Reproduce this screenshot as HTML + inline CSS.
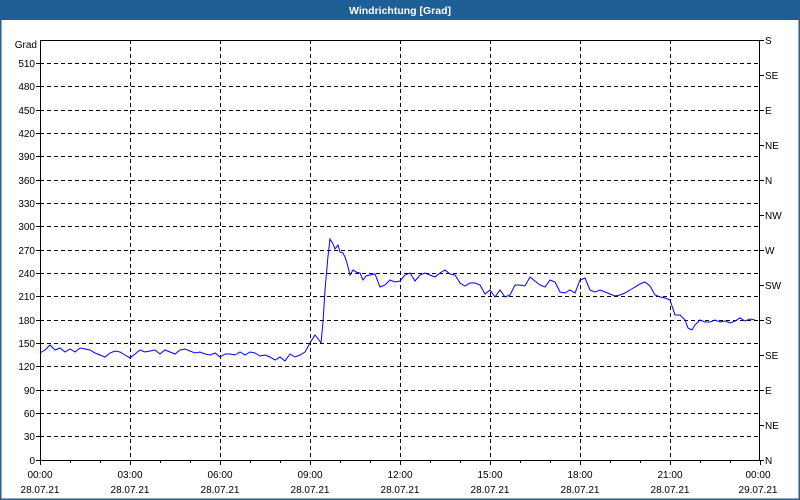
<!DOCTYPE html>
<html><head><meta charset="utf-8"><style>
html,body{margin:0;padding:0;width:800px;height:500px;overflow:hidden;background:#fff}
svg{display:block}
text{font-family:"Liberation Sans",sans-serif;font-size:10px;fill:#000}
</style></head><body>
<svg width="800" height="500" viewBox="0 0 800 500" xmlns="http://www.w3.org/2000/svg">
<rect x="0" y="0" width="800" height="500" fill="#fff"/>
<rect x="0.5" y="0.5" width="799" height="499" fill="none" stroke="#1e5f96" stroke-width="2"/>
<rect x="0" y="0" width="800" height="20" fill="#1e5f96"/>
<text x="400" y="14" text-anchor="middle" style="fill:#fff;font-weight:bold;font-size:10.5px">Windrichtung [Grad]</text>
<g stroke="#000" stroke-width="1" stroke-dasharray="4,3" fill="none">
<path d="M40 436.5H760M40 413.5H760M40 390.5H760M40 366.5H760M40 343.5H760M40 320.5H760M40 296.5H760M40 273.5H760M40 250.5H760M40 226.5H760M40 203.5H760M40 180.5H760M40 156.5H760M40 133.5H760M40 110.5H760M40 86.5H760M40 63.5H760"/>
<path d="M130.5 40V460M220.5 40V460M310.5 40V460M400.5 40V460M490.5 40V460M580.5 40V460M670.5 40V460"/>
</g>
<rect x="40.5" y="40.5" width="719" height="420" fill="none" stroke="#000"/>
<g stroke="#000">
<path d="M36 460.5H40M36 436.5H40M36 413.5H40M36 390.5H40M36 366.5H40M36 343.5H40M36 320.5H40M36 296.5H40M36 273.5H40M36 250.5H40M36 226.5H40M36 203.5H40M36 180.5H40M36 156.5H40M36 133.5H40M36 110.5H40M36 86.5H40M36 63.5H40"/>
<path d="M760 40.5H764M760 75.5H764M760 110.5H764M760 145.5H764M760 180.5H764M760 215.5H764M760 250.5H764M760 285.5H764M760 320.5H764M760 355.5H764M760 390.5H764M760 425.5H764M760 460.5H764"/>
<path d="M40.5 460V465M70.5 460V463M100.5 460V463M130.5 460V465M160.5 460V463M190.5 460V463M220.5 460V465M250.5 460V463M280.5 460V463M310.5 460V465M340.5 460V463M370.5 460V463M400.5 460V465M430.5 460V463M460.5 460V463M490.5 460V465M520.5 460V463M550.5 460V463M580.5 460V465M610.5 460V463M640.5 460V463M670.5 460V465M700.5 460V463M730.5 460V463M760.5 460V465"/>
</g>
<g text-anchor="end">
<text x="37" y="48">Grad</text>
<text x="35" y="67">510</text><text x="35" y="90">480</text><text x="35" y="114">450</text><text x="35" y="137">420</text><text x="35" y="160">390</text><text x="35" y="184">360</text><text x="35" y="207">330</text><text x="35" y="230">300</text><text x="35" y="254">270</text><text x="35" y="277">240</text><text x="35" y="300">210</text><text x="35" y="324">180</text><text x="35" y="347">150</text><text x="35" y="370">120</text><text x="35" y="394">90</text><text x="35" y="417">60</text><text x="35" y="440">30</text><text x="35" y="464">0</text>
</g>
<g>
<text x="765" y="44">S</text><text x="765" y="79">SE</text><text x="765" y="114">E</text><text x="765" y="149">NE</text><text x="765" y="184">N</text><text x="765" y="219">NW</text><text x="765" y="254">W</text><text x="765" y="289">SW</text><text x="765" y="324">S</text><text x="765" y="359">SE</text><text x="765" y="394">E</text><text x="765" y="429">NE</text><text x="765" y="464">N</text>
</g>
<g text-anchor="middle">
<text x="40" y="478">00:00</text><text x="130" y="478">03:00</text><text x="220" y="478">06:00</text><text x="310" y="478">09:00</text><text x="400" y="478">12:00</text><text x="490" y="478">15:00</text><text x="580" y="478">18:00</text><text x="670" y="478">21:00</text><text x="758" y="478">00:00</text>
<text x="40" y="493">28.07.21</text><text x="130" y="493">28.07.21</text><text x="220" y="493">28.07.21</text><text x="310" y="493">28.07.21</text><text x="400" y="493">28.07.21</text><text x="490" y="493">28.07.21</text><text x="580" y="493">28.07.21</text><text x="670" y="493">28.07.21</text><text x="758" y="493">29.07.21</text>
</g>
<polyline fill="none" stroke="#0000ff" stroke-width="1" points="40,353 45,350 50,345 55,350 60,348 65,352 70,349 75,352 80,348 85,349 90,350 95,353 100,355 105,357 110,353 115,351 120,352 125,355 130,358 135,354 140,350 145,352 150,351 155,350 160,354 165,350 170,352 175,354 180,350 185,349 190,351 195,353 200,352 205,354 210,355 215,353 220,357 225,354 230,354 235,355 240,352 245,355 250,352 255,353 260,356 265,355 270,357 275,360 280,357 285,361 290,354 295,357 300,355 305,352 310,343 315,335 319,340 321,343 323,322 325,290 328,256 330,239 333,244 335,249 338,245 340,252 343,253 345,257 347,263 350,275 353,270 356,272 360,273 363,280 366,276 370,275 375,274 380,287 385,285 390,280 395,282 400,281 405,275 410,273 415,281 420,275 425,273 430,275 435,277 440,273 445,270 450,274 455,275 460,283 465,286 470,283 475,283 480,285 485,294 490,290 495,297 500,290 505,297 510,295 515,285 520,285 525,286 530,277 535,281 540,285 545,287 550,280 555,282 560,292 565,293 570,290 575,293 580,280 585,278 590,290 595,292 600,290 605,292 610,294 615,296 620,295 625,293 630,290 635,287 640,284 645,282 650,286 655,295 660,297 665,298 670,300 675,315 680,315 685,320 688,328 692,330 695,325 700,320 705,322 710,322 715,320 720,322 725,321 730,323 735,321 740,318 745,321 750,319 755,320"/>
</svg>
</body></html>
